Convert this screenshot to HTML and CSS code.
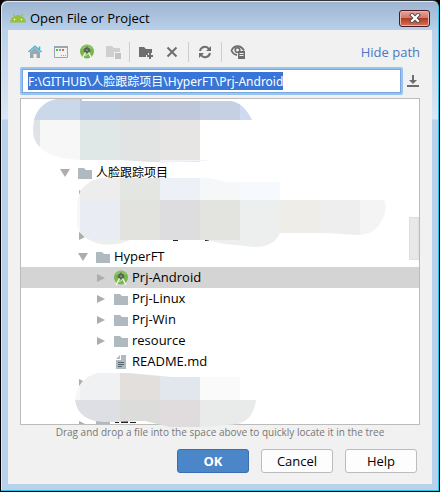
FILE: index.html
```html
<!DOCTYPE html>
<html lang="en">
<head>
<meta charset="utf-8">
<title>Open File or Project</title>
<link rel="stylesheet" href="styles.css">
</head>
<body>
<svg class="defs" aria-hidden="true">
  <symbol id="folder" viewBox="0 0 16 16"><path fill="#aeb9c0" d="M1 3h6l2 2h6v9H1z"/></symbol>
  <symbol id="closed" viewBox="0 0 10 10"><path fill="#adadad" d="M1 1l8 4-8 4z"/></symbol>
  <symbol id="opened" viewBox="0 0 10 10"><path fill="#adadad" d="M0 1h10L5 9z"/></symbol>
  <symbol id="studio" viewBox="0 0 16 16">
    <circle cx="8" cy="7.500" r="7" fill="#78b74a"/>
    <path fill="#a5d283" d="M2 4a7 7 0 0 1 12 0L8 8z" opacity=".4"/>
    <path fill="#56655a" d="M7.300 2.500h1.400v1.200A2.600 2.600 0 0 1 10.800 8L8 9.500 5.200 8a2.600 2.600 0 0 1 2.100-4.300z"/>
    <path fill="none" stroke="#f3f6f1" stroke-width="1.500" d="M6.500 8.500L3 15M9.500 8.500L13 15"/>
    <path fill="none" stroke="#d9ecca" d="M4.500 11.500l3-.5 2.500-2"/>
    <circle cx="8" cy="6.200" r=".8" fill="#a9c596"/>
  </symbol>
</svg>
<div class="window">
  <header class="titlebar">
    <svg class="droid" viewBox="0 0 16 10"><path fill="#97c03d" d="M0 9.500a8 8 0 0 1 4-6.300L2.700.8l.8-.4L5 2.700a8 8 0 0 1 6 0L12.500.4l.8.4L12 3.200a8 8 0 0 1 4 6.300z"/><circle cx="4.500" cy="6.500" r=".8" fill="#fff"/><circle cx="11.500" cy="6.500" r=".8" fill="#fff"/></svg>
    <h1>Open File or Project</h1>
    <button class="close" aria-label="Close"><svg viewBox="0 0 12 10"><path d="M3 2l6 6M9 2L3 8" stroke="#4d4650" stroke-width="4" stroke-linecap="square"/><path d="M3 2l6 6M9 2L3 8" stroke="#fff" stroke-width="2.200" stroke-linecap="square"/></svg></button>
  </header>
  <main class="content">
    <div class="toolbar">
      <button class="tool" aria-label="Home"><svg viewBox="0 0 16 16"><path fill="#9aa7b0" d="M3 8l5-4.500L13 8v6H9.500v-4h-3v4H3z"/><path fill="none" stroke="#46b6dd" stroke-width="1.600" d="M1.500 8L8 2.200 14.500 8M12.500 2.500v3"/></svg></button>
      <button class="tool" aria-label="Desktop"><svg viewBox="0 0 16 16"><path fill="none" stroke="#9aa7b0" d="M1.500 2.500h13v11h-13z"/><path fill="#9aa7b0" d="M1 2h14v2H1zM8 11h1v1H8zM10 11h1v1h-1zM12 11h1v1h-1z"/><path fill="#62b543" d="M3 5h2v2H3z"/><path fill="#40b6e0" d="M6 5h2v2H6z"/><path fill="#f26522" d="M9 5h2v2H9z"/></svg></button>
      <button class="tool" aria-label="Project directory"><svg><use href="#studio"/></svg></button>
      <button class="tool" aria-label="Module directory" disabled><svg viewBox="0 0 16 16"><path fill="#cfcfcf" d="M1 2h6l2 2h6v4H9v5H1z"/><path fill="#c3c3c3" d="M10 9h6v6h-6z"/></svg></button>
      <span class="separator"></span>
      <button class="tool" aria-label="New folder"><svg viewBox="0 0 16 16"><path fill="#6e6e6e" d="M1 3h5l2 2h6v4h-4v2H8v2H1z"/><path fill="#6e6e6e" d="M11 9h2v2h2v2h-2v2h-2v-2H9v-2h2z"/></svg></button>
      <button class="tool" aria-label="Delete"><svg viewBox="0 0 16 16"><path fill="none" stroke="#6e6e6e" stroke-width="2" d="M3.500 3.500l9 9M12.500 3.500l-9 9"/></svg></button>
      <span class="separator"></span>
      <button class="tool" aria-label="Refresh"><svg viewBox="0 0 16 16"><path fill="none" stroke="#6e6e6e" stroke-width="2" d="M3 7a5 5 0 0 1 9-2M13 9a5 5 0 0 1-9 2"/><path fill="#6e6e6e" d="M14 2v5H9zM2 14V9h5z"/></svg></button>
      <span class="separator"></span>
      <button class="tool" aria-label="Show hidden files"><svg viewBox="0 0 16 16"><path fill="none" stroke="#6e6e6e" stroke-width="1.800" d="M14 6.500C11 .8 4 .8 1.500 6.500 2.500 9 4.500 10.600 7 11"/><circle cx="7.500" cy="6" r="2.300" fill="none" stroke="#6e6e6e" stroke-width="1.600"/><path fill="#6e6e6e" d="M8 7h7v8H8z"/><path stroke="#f1f1f1" d="M9.500 9.500h4M9.500 11.500h4"/></svg></button>
      <a class="hide" href="#path">Hide path</a>
    </div>
    <div class="pathrow">
      <label class="field"><input id="path" type="text" aria-label="Path" value="F:\GITHUB\人脸跟踪项目\HyperFT\Prj-Android"></label>
      <button class="history" aria-label="Path history"><svg viewBox="0 0 14 14"><path fill="#6e6e6e" d="M6 1h2v5h3L7 10 3 6h3zM1 11h12v2H1z"/></svg></button>
    </div>
    <div class="treebox">
      <ul class="tree">
        <li></li><li></li><li></li>
        <li class="l1"><svg class="arrow"><use href="#opened"/></svg><svg class="icon"><use href="#folder"/></svg><span class="cjk" lang="zh">人脸跟踪项目</span></li>
        <li class="l2"><svg class="arrow"><use href="#closed"/></svg></li>
        <li></li>
        <li class="l2"><svg class="arrow"><use href="#closed"/></svg></li>
        <li class="l2"><svg class="arrow"><use href="#opened"/></svg><svg class="icon"><use href="#folder"/></svg>HyperFT</li>
        <li class="l3 selected"><svg class="arrow"><use href="#closed"/></svg><svg class="icon"><use href="#studio"/></svg>Prj-Android</li>
        <li class="l3"><svg class="arrow"><use href="#closed"/></svg><svg class="icon"><use href="#folder"/></svg>Prj-Linux</li>
        <li class="l3"><svg class="arrow"><use href="#closed"/></svg><svg class="icon"><use href="#folder"/></svg>Prj-Win</li>
        <li class="l3"><svg class="arrow"><use href="#closed"/></svg><svg class="icon"><use href="#folder"/></svg>resource</li>
        <li class="l3"><span class="arrow"></span><svg class="icon" viewBox="0 0 16 16"><path fill="#aeb9c0" d="M8 1h5v14H3V6h5zM7 1v4H3z"/><path stroke="#53616b" d="M5 8.500h6M5 10.500h6M5 12.500h4"/></svg>README.md</li>
        <li class="l2"><svg class="arrow"><use href="#closed"/></svg></li>
        <li></li>
        <li class="l2"><svg class="arrow"><use href="#closed"/></svg><svg class="icon"><use href="#folder"/></svg></li>
      </ul>
      <span class="thumb"></span>
      <svg class="mosaic" viewBox="20 98 400 332" aria-hidden="true">
        <clipPath id="a"><path d="M34 120C37 109 46 99 60 99H82V101H231Q244 103 252 120H200V162H150L120 160H80Q48 158 40 147C31 139 33 128 34 120z"/></clipPath>
        <g clip-path="url(#a)"><path fill="#cbd8ea" d="M30 98h50v22H30z"/><path fill="#b9c9e0" d="M80 98h40v22H80z"/><path fill="#bcc6da" d="M120 98h40v22h-40z"/><path fill="#c0c9db" d="M160 98h40v22h-40z"/><path fill="#c6d0e3" d="M200 98h40v22h-40z"/><path fill="#cddaf0" d="M240 98h20v22h-20z"/><path fill="#dfe3e8" d="M30 120h10v30H30z"/><path fill="#f7f7f7" d="M40 120h40v45H40z"/><path fill="#e0e7e7" d="M80 120h40v45H80z"/><path fill="#e2e4e3" d="M120 120h40v45h-40z"/><path fill="#e8e6e4" d="M160 120h40v45h-40z"/></g>
        <path fill="#f0f3f8" d="M160 160h47v1h-13l-34 2z"/>
        <path fill="#222" d="M173 240h5v1h-5zM205 240h4v1h-4z"/>
        <clipPath id="b"><path d="M77 208C76 190 89 178 105 178H208L228 182H280V200H384Q388 208 383 218 376 234 360 235L325 233H280Q274 247 255 247L225 244 206 240H130Q118 246 100 244 80 238 77 226z"/></clipPath>
        <g clip-path="url(#b)"><path fill="#f6f7f8" d="M70 176h20v75H70z"/><path fill="#ededee" d="M80 176h40v24H80z"/><path fill="#e4e6e4" d="M120 176h40v24h-40z"/><path fill="#edf1f7" d="M160 176h40v24h-40z"/><path fill="#f6f7f9" d="M200 176h40v24h-40z"/><path fill="#f6fafe" d="M240 176h40v24h-40z"/><path fill="#e9ecf3" d="M80 200h40v40H80z"/><path fill="#e2e3df" d="M120 200h40v40h-40z"/><path fill="#dddde0" d="M160 200h40v40h-40z"/><path fill="#e3e4df" d="M200 200h40v40h-40z"/><path fill="#ecefee" d="M240 200h40v50h-40zM80 240h50v10H80zM200 240h40v10h-40z"/><path fill="#eeede8" d="M280 200h40v40h-40z"/><path fill="#eeeeef" d="M320 200h40v40h-40z"/><path fill="#f4f4f4" d="M360 200h30v40h-30z"/></g>
        <path fill="#222" d="M115 422h4v1h-4zM121 421h7v2h-7zM130 422h6v1h-6z"/>
        <clipPath id="c"><path d="M75 400Q77 378 98 373H128L172 377 240 377V400H256Q254 419 238 424L205 427H170L145 421 110 422Q78 423 75 400z"/></clipPath>
        <g clip-path="url(#c)"><path fill="#f7f7f8" d="M70 370h10v30H70z"/><path fill="#f0f1f3" d="M80 370h40v30H80z"/><path fill="#e3dfdc" d="M120 370h40v30h-40z"/><path fill="#e1e7ed" d="M160 370h40v30h-40z"/><path fill="#fafafa" d="M200 370h40v30h-40z"/><path fill="#dedfe4" d="M70 400h50v30H70z"/><path fill="#dcdcda" d="M120 400h40v30h-40z"/><path fill="#e0dcde" d="M160 400h40v30h-40z"/><path fill="#e9ebea" d="M200 400h60v30h-60z"/></g>
      </svg>
    </div>
    <p class="hint">Drag and drop a file into the space above to quickly locate it in the tree</p>
    <div class="actions">
      <button class="btn primary">OK</button>
      <button class="btn">Cancel</button>
      <button class="btn">Help</button>
    </div>
  </main>
</div>
<script src="script.js"></script>
</body>
</html>
```
FILE: script.js
```js
const path = document.getElementById("path");
path.focus();
path.select();
```
FILE: styles.css
```css
* { box-sizing: border-box; }
body {
  margin: 0;
  background: #000;
  color: #000;
  font: 13px/21px "Open Sans", "Noto Sans CJK SC", sans-serif;
}
button { font: inherit; padding: 0; border: 0; background: none; }
svg { display: block; }
.defs { position: absolute; width: 0; height: 0; }
.window {
  display: flex;
  flex-direction: column;
  min-height: 100vh;
  padding: 1px 7px 7px;
  border: 1px solid #000;
  border-top-color: #333;
  border-radius: 7px 7px 0 0;
  background: linear-gradient(#9cb4d1, #b9d1ea 30px, #dae7f4 118px, #b9d1ea 119px);
  box-shadow: inset -1px -1px 0 #27c5e6, inset 1px 1px 0 #dce8f4;
}
.titlebar { display: flex; align-items: center; height: 28px; padding: 4px 2px 0; gap: 4px; }
.droid { width: 16px; height: 10px; }
h1 { margin: 0; flex: 1; font-size: 13px; font-weight: 400; }
.close {
  display: grid;
  place-items: center;
  width: 31px;
  height: 17px;
  border: 1px solid #4b1a24;
  border-radius: 3px;
  background: linear-gradient(#e3a599, #d07a6b 45%, #b63a22 50%, #d2745a);
  box-shadow: inset 0 0 0 1px #e7b5aa;
}
.close svg { width: 12px; height: 10px; }
.content { flex: 1; background: #f1f1f1; padding: 10px 12px; }
.toolbar { display: flex; align-items: center; height: 24px; padding-left: 7px; gap: 10px; }
.tool, .tool svg { width: 16px; height: 16px; }
.separator { width: 1px; height: 20px; margin: 0 -2px; background: #cdcdcd; }
.hide { margin-left: auto; color: #4a78c2; text-decoration: none; }
.pathrow { display: flex; align-items: center; gap: 3px; margin-top: 3px; }
.field { display: flex; flex: 1; border: 2px solid #97c3f3; border-radius: 2px; }
#path {
  flex: 1;
  min-width: 0;
  height: 24px;
  padding: 0 5px;
  border: 1px solid #7aa7dc;
  outline: 0;
  background: #fff;
  font: 12px/21px "Noto Sans", "Noto Sans CJK SC", sans-serif;
}
#path::selection { background: #3875d7; color: #fff; }
.history, .history svg { width: 14px; height: 14px; }
.treebox { position: relative; margin-top: 3px; }
.tree {
  height: 327px;
  margin: 0;
  padding: 0;
  overflow: hidden;
  border: 1px solid #bcbcbc;
  background: #fff;
  list-style: none;
}
.tree li { display: flex; align-items: center; height: 21px; }
.l1 { padding-left: 39px; }
.l2 { padding-left: 57px; }
.l3 { padding-left: 75px; }
.selected { background: #d4d4d4; }
.cjk { font-size: 12px; }
.arrow { width: 10px; height: 10px; margin-right: 7px; }
.icon { width: 16px; height: 16px; margin-right: 3px; }
.thumb { position: absolute; right: 1px; top: 119px; width: 10px; height: 43px; border: 1px solid #dfdfdf; background: #e8e8e8; }
.mosaic { position: absolute; left: 0; top: 0; width: 400px; height: 332px; }
.hint { margin: 0; text-align: center; font-size: 10px; line-height: 14px; color: #777; }
.actions { display: flex; justify-content: flex-end; gap: 12px; margin-top: 10px; padding-right: 3px; }
.btn { width: 72px; height: 24px; border: 1px solid #bcbcbc; border-radius: 3px; background: #fdfdfd; }
.primary { border-color: #3c6cb4; background: #4a86c8; color: #fff; font-weight: 700; }
```
